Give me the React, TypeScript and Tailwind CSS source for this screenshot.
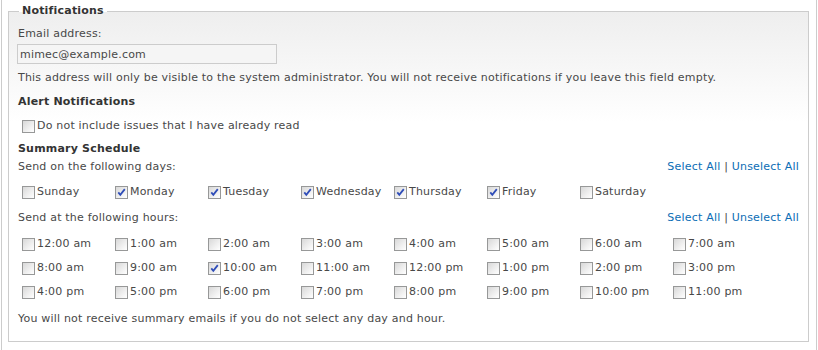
import React from "react";

const days = [
  { label: "Sunday", checked: false },
  { label: "Monday", checked: true },
  { label: "Tuesday", checked: true },
  { label: "Wednesday", checked: true },
  { label: "Thursday", checked: true },
  { label: "Friday", checked: true },
  { label: "Saturday", checked: false },
];

const hourLabels = [
  "12:00 am", "1:00 am", "2:00 am", "3:00 am", "4:00 am", "5:00 am", "6:00 am", "7:00 am",
  "8:00 am", "9:00 am", "10:00 am", "11:00 am", "12:00 pm", "1:00 pm", "2:00 pm", "3:00 pm",
  "4:00 pm", "5:00 pm", "6:00 pm", "7:00 pm", "8:00 pm", "9:00 pm", "10:00 pm", "11:00 pm",
];

function Box({ checked }: { checked: boolean }) {
  return (
    <span className="ml-[4px] flex h-[13px] w-[13px] shrink-0 items-center justify-center border border-[#979898] bg-[linear-gradient(135deg,#d8d8d8,#f2f2f2_65%,#ffffff)]">
      {checked && (
        <svg width="11" height="11" viewBox="0 0 11 11">
          <path d="M2.3 5.4 L4.3 7.8 L8.8 2.1" fill="none" stroke="#2f4db8" strokeWidth="1.8" />
        </svg>
      )}
    </span>
  );
}

function Check({ label, checked }: { label: string; checked: boolean }) {
  return (
    <label className="flex h-[14px] w-[93px] items-center gap-[2px]">
      <Box checked={checked} />
      <span>{label}</span>
    </label>
  );
}

function SelectLinks() {
  return (
    <span>
      <a className="text-[#0b6db5]">Select All</a> | <a className="text-[#0b6db5]">Unselect All</a>
    </span>
  );
}

export default function App() {
  const rows = [0, 1, 2].map((r) => hourLabels.slice(r * 8, r * 8 + 8));

  return (
    <div className="ml-px h-[350px] w-[816px] overflow-hidden border-x border-[#cccccc] bg-white font-['DejaVu_Sans',Verdana,sans-serif] text-[11px] leading-[14px] tracking-[0.2px] text-[#484848]">
      <fieldset className="ml-[6px] mt-[4px] w-[801px] border border-[#cccccc] bg-[linear-gradient(to_bottom,#eeeeee,#ffffff_110px)] px-[9px] pb-[15px]">
        <legend className="ml-px px-[3px] font-bold text-[#333333]">Notifications</legend>

        <div className="mt-[9px]">Email address:</div>
        <input
          className="mt-[3px] block h-[20px] w-[260px] -ml-px border border-[#cccccc] bg-[#f5f5f5] px-[2px] text-[11px] tracking-[0.2px] text-[#484848] outline-none"
          defaultValue="mimec@example.com"
        />
        <div className="mt-[7px]">
          This address will only be visible to the system administrator. You will not receive notifications if you leave this field empty.
        </div>

        <div className="mt-[10px] font-bold text-[#333333]">Alert Notifications</div>
        <label className="mt-[10px] flex h-[14px] items-center gap-[2px]">
          <Box checked={false} />
          <span>Do not include issues that I have already read</span>
        </label>

        <div className="mt-[9px] font-bold text-[#333333]">Summary Schedule</div>
        <div className="mt-[4px] flex justify-between">
          <span>Send on the following days:</span>
          <SelectLinks />
        </div>
        <div className="mt-[11px] flex">
          {days.map((d) => (
            <Check key={d.label} label={d.label} checked={d.checked} />
          ))}
        </div>

        <div className="mt-[12px] flex justify-between">
          <span>Send at the following hours:</span>
          <SelectLinks />
        </div>
        <div className="mt-[12px] flex flex-col gap-[10px]">
          {rows.map((row, i) => (
            <div key={i} className="flex">
              {row.map((h) => (
                <Check key={h} label={h} checked={h === "10:00 am"} />
              ))}
            </div>
          ))}
        </div>

        <div className="mt-[13px]">You will not receive summary emails if you do not select any day and hour.</div>
      </fieldset>
    </div>
  );
}
